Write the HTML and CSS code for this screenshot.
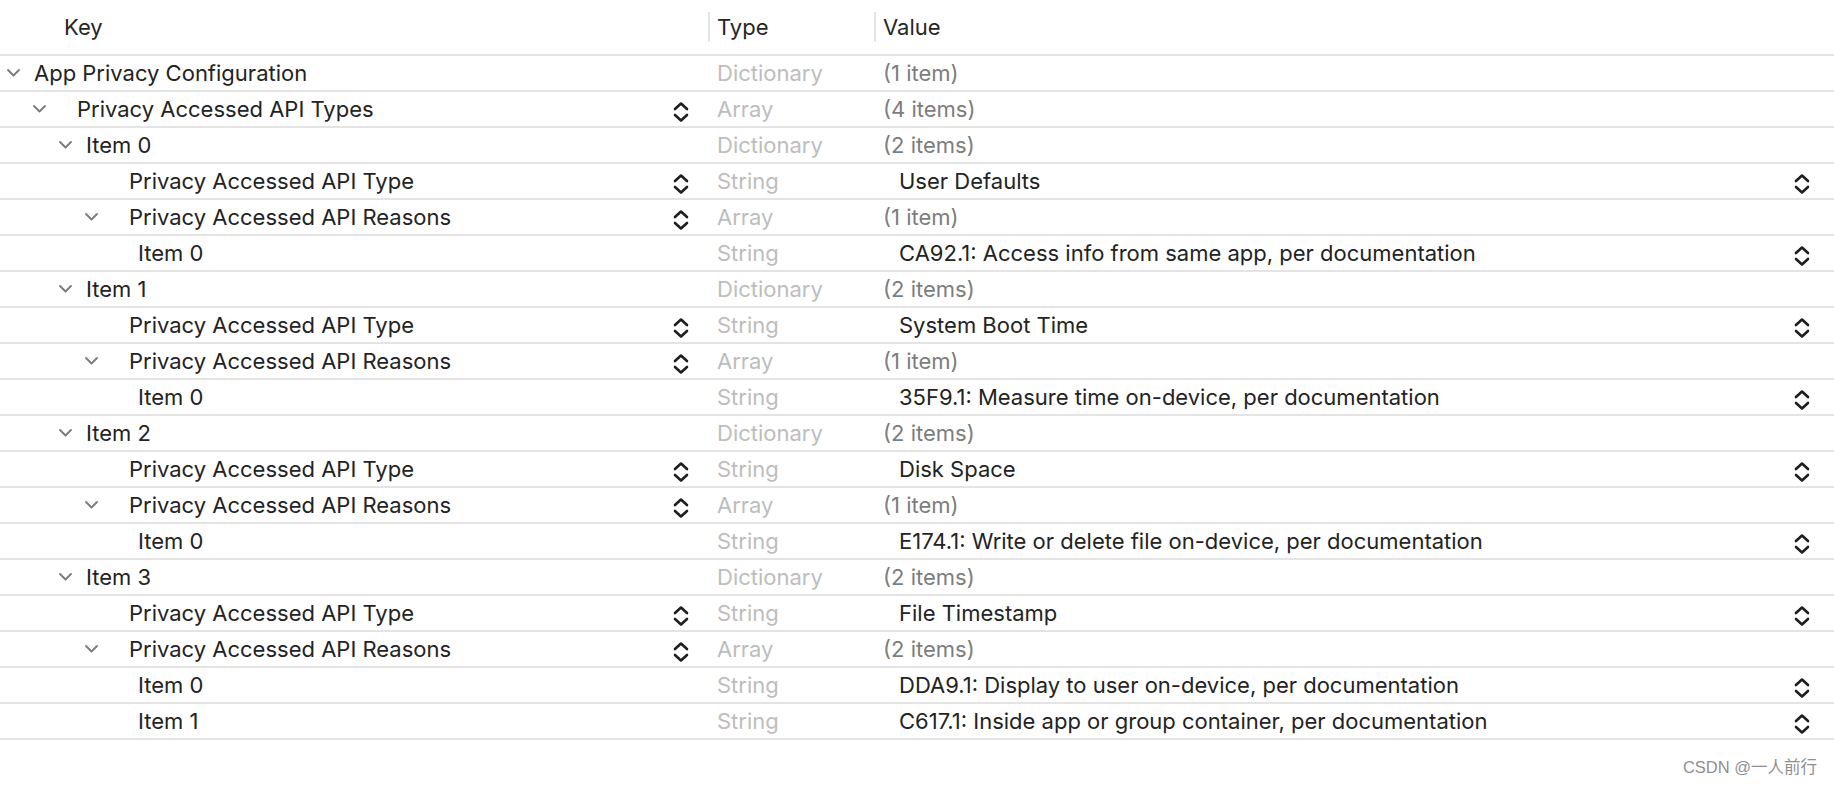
FILE: index.html
```html
<!DOCTYPE html>
<html>
<head>
<meta charset="utf-8">
<link rel="stylesheet" href="styles.css">
</head>
<body>
<div class="editor">
  <div class="row head">
    <div class="hcell key"><span class="hlabel first">Key</span></div>
    <div class="hcell"><span class="hlabel">Type</span></div>
    <div class="hcell"><span class="hlabel">Value</span></div>
  </div>

  <div class="row">
    <div class="key l0"><span class="chev"><svg width="13" height="8" viewBox="0 0 13 8"><polyline points="1,1 6.5,6.5 12,1"/></svg></span><span class="name">App Privacy Configuration</span></div>
    <div class="type">Dictionary</div>
    <div class="value count">(1 item)</div>
  </div>

  <div class="row">
    <div class="key l1"><span class="chev"><svg width="13" height="8" viewBox="0 0 13 8"><polyline points="1,1 6.5,6.5 12,1"/></svg></span><span class="name popup">Privacy Accessed API Types</span><svg class="step" width="16" height="22" viewBox="0 0 16 22"><polyline points="2,8 8,2.5 14,8"/><polyline points="2,14 8,19.5 14,14"/></svg></div>
    <div class="type">Array</div>
    <div class="value count">(4 items)</div>
  </div>

  <div class="row">
    <div class="key l2"><span class="chev"><svg width="13" height="8" viewBox="0 0 13 8"><polyline points="1,1 6.5,6.5 12,1"/></svg></span><span class="name">Item 0</span></div>
    <div class="type">Dictionary</div>
    <div class="value count">(2 items)</div>
  </div>
  <div class="row">
    <div class="key l3"><span class="chev"></span><span class="name popup">Privacy Accessed API Type</span><svg class="step" width="16" height="22" viewBox="0 0 16 22"><polyline points="2,8 8,2.5 14,8"/><polyline points="2,14 8,19.5 14,14"/></svg></div>
    <div class="type">String</div>
    <div class="value str"><span>User Defaults</span><svg class="step" width="16" height="22" viewBox="0 0 16 22"><polyline points="2,8 8,2.5 14,8"/><polyline points="2,14 8,19.5 14,14"/></svg></div>
  </div>
  <div class="row">
    <div class="key l3"><span class="chev"><svg width="13" height="8" viewBox="0 0 13 8"><polyline points="1,1 6.5,6.5 12,1"/></svg></span><span class="name popup">Privacy Accessed API Reasons</span><svg class="step" width="16" height="22" viewBox="0 0 16 22"><polyline points="2,8 8,2.5 14,8"/><polyline points="2,14 8,19.5 14,14"/></svg></div>
    <div class="type">Array</div>
    <div class="value count">(1 item)</div>
  </div>
  <div class="row">
    <div class="key l4"><span class="chev"></span><span class="name">Item 0</span></div>
    <div class="type">String</div>
    <div class="value str"><span>CA92.1: Access info from same app, per documentation</span><svg class="step" width="16" height="22" viewBox="0 0 16 22"><polyline points="2,8 8,2.5 14,8"/><polyline points="2,14 8,19.5 14,14"/></svg></div>
  </div>

  <div class="row">
    <div class="key l2"><span class="chev"><svg width="13" height="8" viewBox="0 0 13 8"><polyline points="1,1 6.5,6.5 12,1"/></svg></span><span class="name">Item 1</span></div>
    <div class="type">Dictionary</div>
    <div class="value count">(2 items)</div>
  </div>
  <div class="row">
    <div class="key l3"><span class="chev"></span><span class="name popup">Privacy Accessed API Type</span><svg class="step" width="16" height="22" viewBox="0 0 16 22"><polyline points="2,8 8,2.5 14,8"/><polyline points="2,14 8,19.5 14,14"/></svg></div>
    <div class="type">String</div>
    <div class="value str"><span>System Boot Time</span><svg class="step" width="16" height="22" viewBox="0 0 16 22"><polyline points="2,8 8,2.5 14,8"/><polyline points="2,14 8,19.5 14,14"/></svg></div>
  </div>
  <div class="row">
    <div class="key l3"><span class="chev"><svg width="13" height="8" viewBox="0 0 13 8"><polyline points="1,1 6.5,6.5 12,1"/></svg></span><span class="name popup">Privacy Accessed API Reasons</span><svg class="step" width="16" height="22" viewBox="0 0 16 22"><polyline points="2,8 8,2.5 14,8"/><polyline points="2,14 8,19.5 14,14"/></svg></div>
    <div class="type">Array</div>
    <div class="value count">(1 item)</div>
  </div>
  <div class="row">
    <div class="key l4"><span class="chev"></span><span class="name">Item 0</span></div>
    <div class="type">String</div>
    <div class="value str"><span>35F9.1: Measure time on-device, per documentation</span><svg class="step" width="16" height="22" viewBox="0 0 16 22"><polyline points="2,8 8,2.5 14,8"/><polyline points="2,14 8,19.5 14,14"/></svg></div>
  </div>

  <div class="row">
    <div class="key l2"><span class="chev"><svg width="13" height="8" viewBox="0 0 13 8"><polyline points="1,1 6.5,6.5 12,1"/></svg></span><span class="name">Item 2</span></div>
    <div class="type">Dictionary</div>
    <div class="value count">(2 items)</div>
  </div>
  <div class="row">
    <div class="key l3"><span class="chev"></span><span class="name popup">Privacy Accessed API Type</span><svg class="step" width="16" height="22" viewBox="0 0 16 22"><polyline points="2,8 8,2.5 14,8"/><polyline points="2,14 8,19.5 14,14"/></svg></div>
    <div class="type">String</div>
    <div class="value str"><span>Disk Space</span><svg class="step" width="16" height="22" viewBox="0 0 16 22"><polyline points="2,8 8,2.5 14,8"/><polyline points="2,14 8,19.5 14,14"/></svg></div>
  </div>
  <div class="row">
    <div class="key l3"><span class="chev"><svg width="13" height="8" viewBox="0 0 13 8"><polyline points="1,1 6.5,6.5 12,1"/></svg></span><span class="name popup">Privacy Accessed API Reasons</span><svg class="step" width="16" height="22" viewBox="0 0 16 22"><polyline points="2,8 8,2.5 14,8"/><polyline points="2,14 8,19.5 14,14"/></svg></div>
    <div class="type">Array</div>
    <div class="value count">(1 item)</div>
  </div>
  <div class="row">
    <div class="key l4"><span class="chev"></span><span class="name">Item 0</span></div>
    <div class="type">String</div>
    <div class="value str"><span>E174.1: Write or delete file on-device, per documentation</span><svg class="step" width="16" height="22" viewBox="0 0 16 22"><polyline points="2,8 8,2.5 14,8"/><polyline points="2,14 8,19.5 14,14"/></svg></div>
  </div>

  <div class="row">
    <div class="key l2"><span class="chev"><svg width="13" height="8" viewBox="0 0 13 8"><polyline points="1,1 6.5,6.5 12,1"/></svg></span><span class="name">Item 3</span></div>
    <div class="type">Dictionary</div>
    <div class="value count">(2 items)</div>
  </div>
  <div class="row">
    <div class="key l3"><span class="chev"></span><span class="name popup">Privacy Accessed API Type</span><svg class="step" width="16" height="22" viewBox="0 0 16 22"><polyline points="2,8 8,2.5 14,8"/><polyline points="2,14 8,19.5 14,14"/></svg></div>
    <div class="type">String</div>
    <div class="value str"><span>File Timestamp</span><svg class="step" width="16" height="22" viewBox="0 0 16 22"><polyline points="2,8 8,2.5 14,8"/><polyline points="2,14 8,19.5 14,14"/></svg></div>
  </div>
  <div class="row">
    <div class="key l3"><span class="chev"><svg width="13" height="8" viewBox="0 0 13 8"><polyline points="1,1 6.5,6.5 12,1"/></svg></span><span class="name popup">Privacy Accessed API Reasons</span><svg class="step" width="16" height="22" viewBox="0 0 16 22"><polyline points="2,8 8,2.5 14,8"/><polyline points="2,14 8,19.5 14,14"/></svg></div>
    <div class="type">Array</div>
    <div class="value count">(2 items)</div>
  </div>
  <div class="row">
    <div class="key l4"><span class="chev"></span><span class="name">Item 0</span></div>
    <div class="type">String</div>
    <div class="value str"><span>DDA9.1: Display to user on-device, per documentation</span><svg class="step" width="16" height="22" viewBox="0 0 16 22"><polyline points="2,8 8,2.5 14,8"/><polyline points="2,14 8,19.5 14,14"/></svg></div>
  </div>
  <div class="row">
    <div class="key l4"><span class="chev"></span><span class="name">Item 1</span></div>
    <div class="type">String</div>
    <div class="value str"><span>C617.1: Inside app or group container, per documentation</span><svg class="step" width="16" height="22" viewBox="0 0 16 22"><polyline points="2,8 8,2.5 14,8"/><polyline points="2,14 8,19.5 14,14"/></svg></div>
  </div>
</div>
<div class="watermark">CSDN @一人前行</div>
</body>
</html>
```

FILE: styles.css
```css
html, body {
  margin: 0;
  padding: 0;
  background: #ffffff;
}
body {
  font-family: Inter, "Noto Sans", "Liberation Sans", sans-serif;
  font-size: 22px;
  color: #232323;
  width: 1834px;
  height: 786px;
  overflow: hidden;
  position: relative;
}
.editor {
  display: flex;
  flex-direction: column;
}
.row {
  display: grid;
  grid-template-columns: 708px 166px 1fr;
  height: 34px;
  border-bottom: 2px solid #e4e4e4;
  align-items: center;
}
.row.head {
  height: 54px;
}
.hcell {
  display: flex;
  align-items: center;
  height: 100%;
}
.hlabel {
  display: flex;
  align-items: center;
  height: 30px;
  border-left: 2px solid #e4e4e4;
  padding-left: 7px;
  color: #262626;
}
.hlabel.first {
  border-left: none;
  padding-left: 64px;
}
.key {
  display: flex;
  align-items: center;
  height: 100%;
  padding-right: 19px;
}
.l0 { padding-left: 7px; }
.l1 { padding-left: 33px; }
.l2 { padding-left: 59px; }
.l3 { padding-left: 85px; }
.l4 { padding-left: 111px; }
.chev {
  width: 27px;
  flex: none;
  display: flex;
  align-items: center;
}
.chev svg polyline {
  fill: none;
  stroke: #7a7a7a;
  stroke-width: 1.8;
  stroke-linecap: round;
  stroke-linejoin: round;
}
.name {
  flex: 1;
  white-space: nowrap;
}
.name.popup {
  padding-left: 17px;
}
.step {
  flex: none;
  margin-top: 5px;
}
.step polyline {
  fill: none;
  stroke: #1e1e1e;
  stroke-width: 2.6;
  stroke-linecap: round;
  stroke-linejoin: round;
}
.type {
  padding-left: 9px;
  color: #bdbdbd;
}
.value {
  padding-left: 9px;
  display: flex;
  align-items: center;
  height: 100%;
}
.value.count {
  color: #7d7d7d;
}
.value.str {
  padding-left: 25px;
  padding-right: 24px;
}
.value.str span {
  flex: 1;
}
.watermark {
  position: absolute;
  right: 17px;
  bottom: 8px;
  font-family: "Liberation Sans", "Noto Sans CJK SC", sans-serif;
  font-size: 16.5px;
  color: #8f8f8f;
}
```
